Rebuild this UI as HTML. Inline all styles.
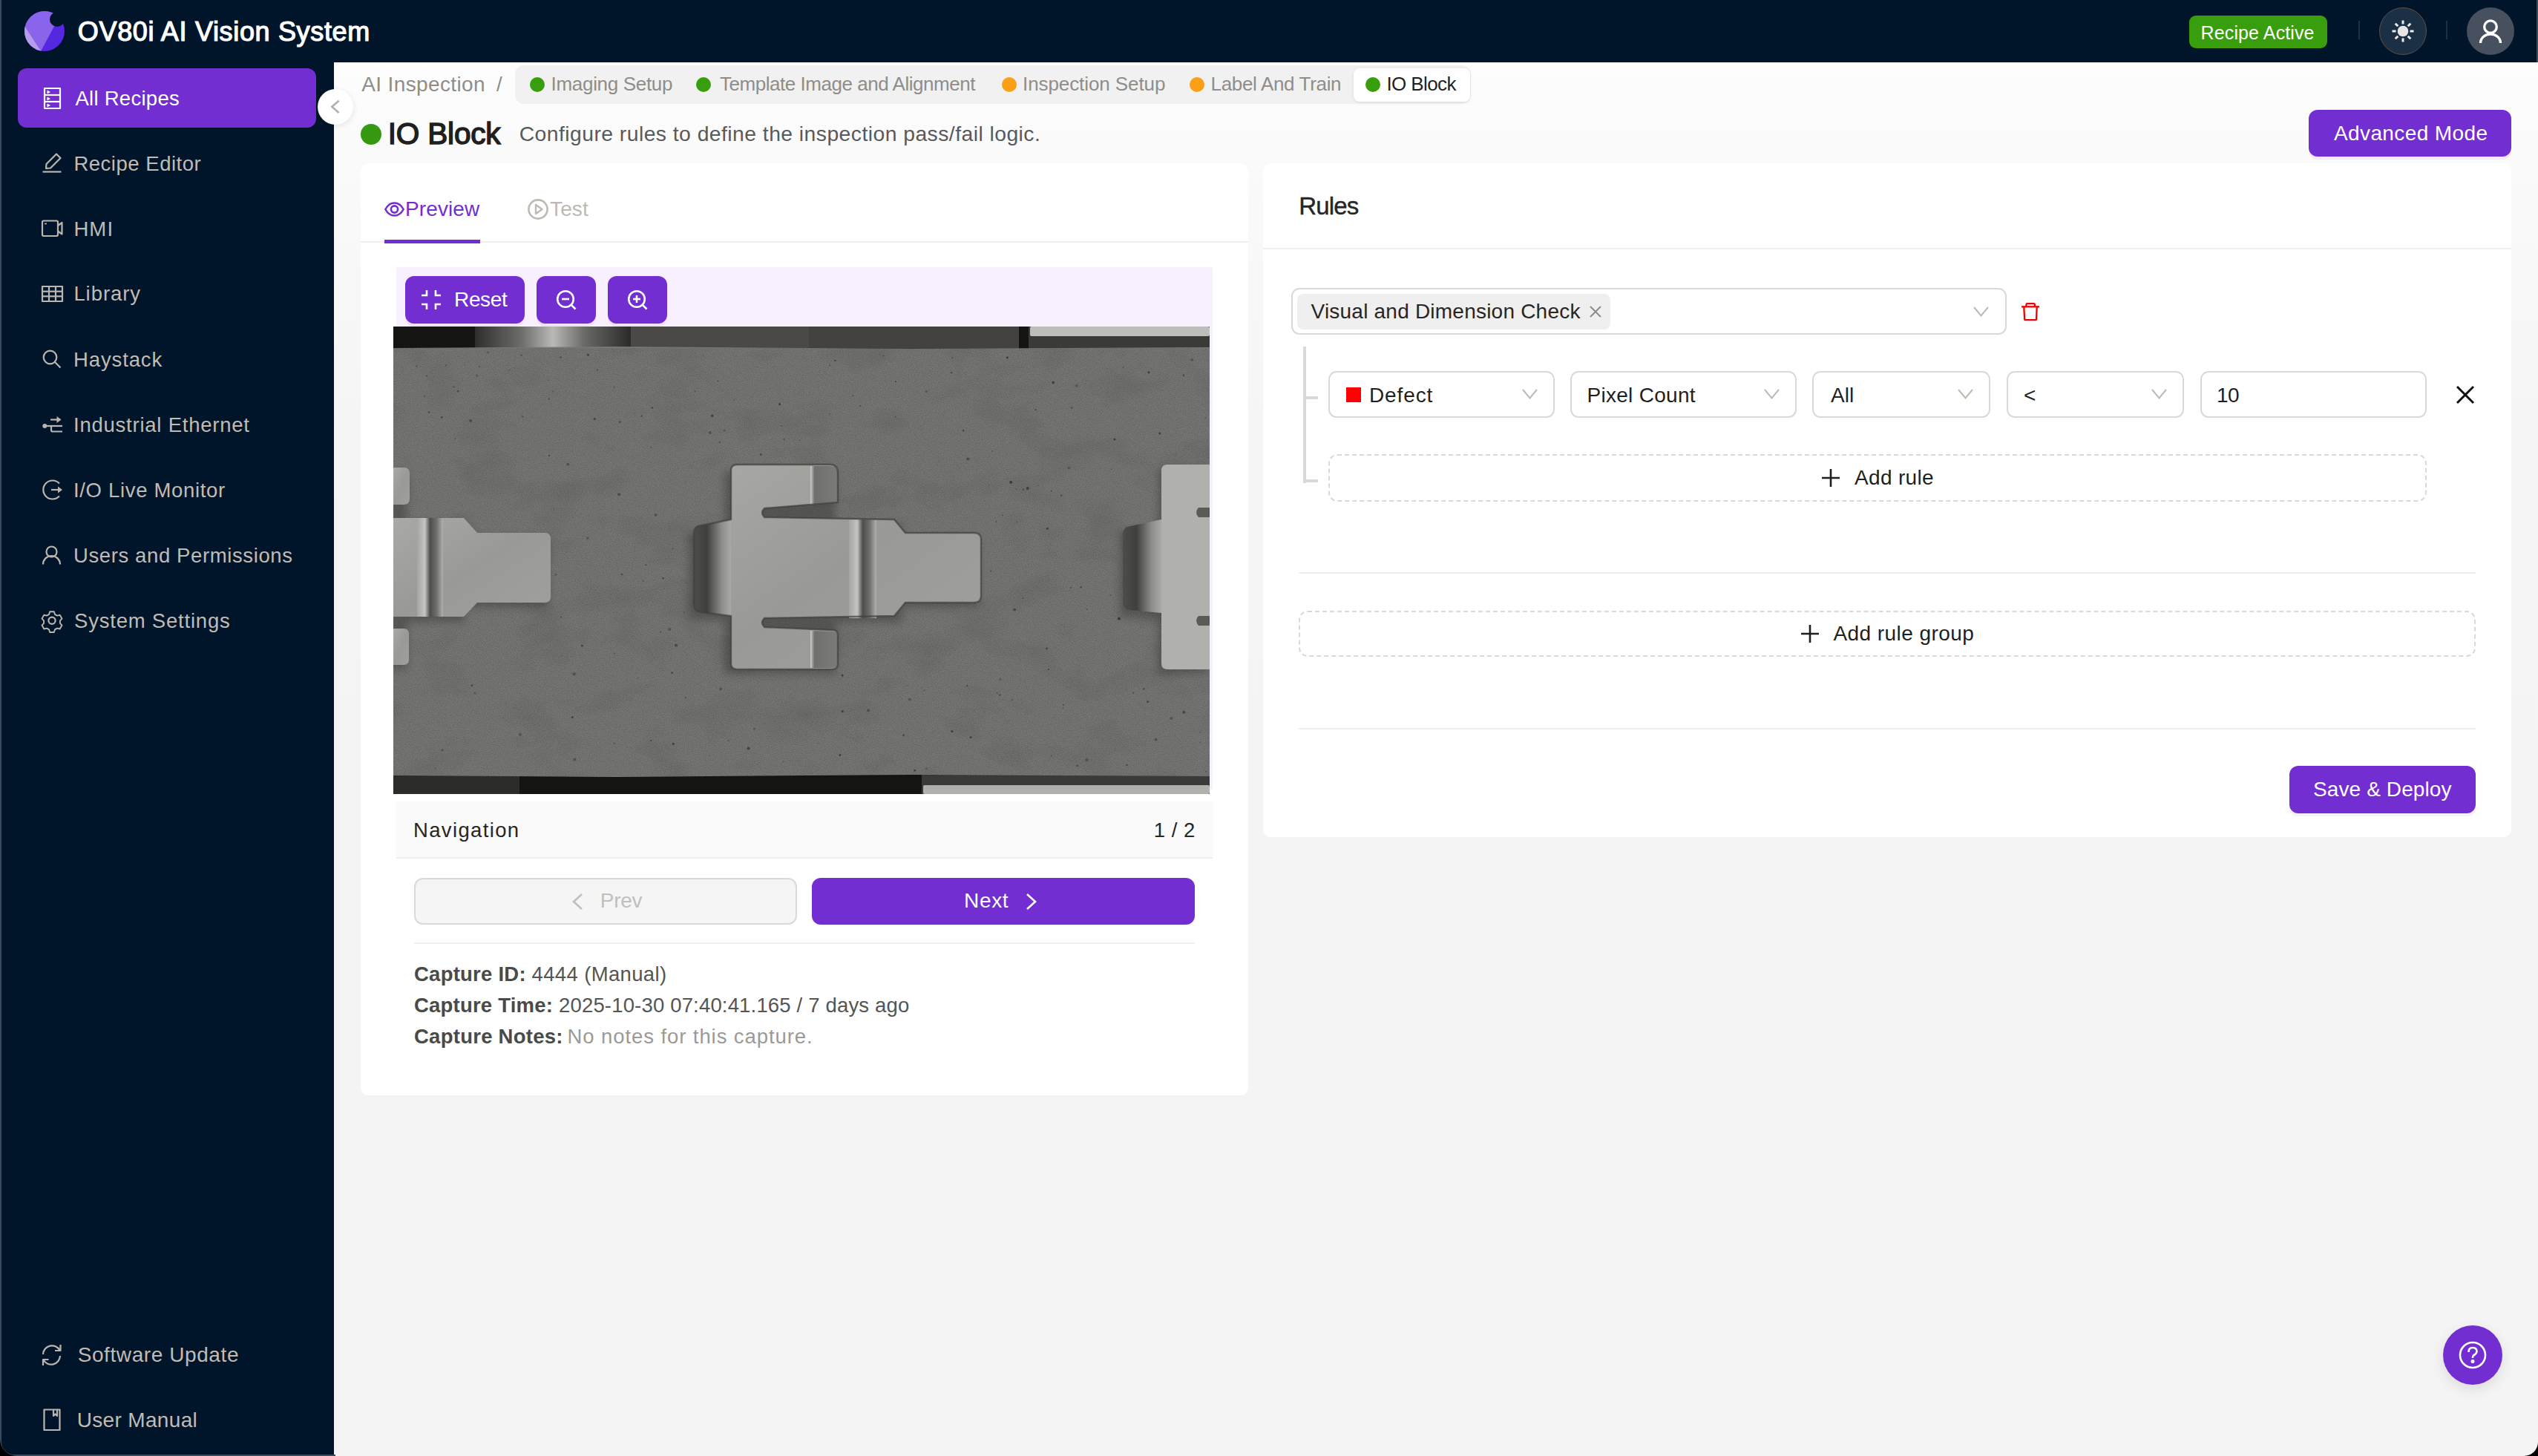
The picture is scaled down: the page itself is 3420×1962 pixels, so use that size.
<!DOCTYPE html>
<html><head><meta charset="utf-8">
<style>
*{box-sizing:border-box;margin:0;padding:0}
html,body{width:3420px;height:1962px;overflow:hidden;background:#000}
body{font-family:"Liberation Sans",sans-serif;position:relative}
.abs{position:absolute}
#win{position:absolute;left:0;top:0;width:3420px;height:1962px;background:#001529;border-radius:0 0 19px 23px;overflow:hidden}
#lb{position:absolute;left:0;top:0;width:452px;height:1962px;border-left:2px solid #3b4a5b;border-bottom:2px solid #3b4a5b;border-bottom-left-radius:19px;z-index:5;pointer-events:none}
#rb{position:absolute;right:0;top:0;width:2px;height:84px;background:#3d4a5a;z-index:5}
#main{position:absolute;left:450px;top:84px;width:2970px;height:1878px;background:linear-gradient(#fdfdfd 0px,#f9f9f9 200px,#f5f5f5 500px,#f4f4f4 1000px,#f4f4f4)}
.menu{position:absolute;left:24px;width:402px;height:80px;border-radius:12px;color:#c6c1ba;font-size:27px}
.menu .t{position:absolute;left:77px;top:0;line-height:80px;white-space:nowrap}
.menu.act{background:#722ed1;color:#fff}
.card{position:absolute;background:#fff;border-radius:11px}
.btnp{position:absolute;background:#722ed1;border-radius:12px;box-shadow:0 4px 0 rgba(114,46,209,.07)}
.sel{position:absolute;border:2px solid #d9d9d9;border-radius:11px;background:#fff}
.txt{position:absolute;white-space:nowrap}
.dot{width:20px;height:20px;border-radius:50%}
.chev{width:24px;height:20px}
.chev path{fill:none;stroke:#bdbab4;stroke-width:2}
.dash{border:2px dashed #d9d9d9;border-radius:12px}
#m1{left:101.40px!important;top:111.67px!important;font-size:27.50px!important;line-height:41px!important;letter-spacing:0.280px!important}
#m2{left:99.40px!important;top:199.97px!important;font-size:27.50px!important;line-height:41px!important;letter-spacing:0.523px!important}
#m3{left:99.40px!important;top:287.97px!important;font-size:27.50px!important;line-height:41px!important;letter-spacing:1.116px!important}
#m4{left:99.40px!important;top:375.37px!important;font-size:27.50px!important;line-height:41px!important;letter-spacing:0.932px!important}
#m5{left:99.00px!important;top:463.67px!important;font-size:27.50px!important;line-height:41px!important;letter-spacing:0.880px!important}
#m6{left:99.00px!important;top:551.67px!important;font-size:27.50px!important;line-height:41px!important;letter-spacing:0.764px!important}
#m7{left:99.00px!important;top:639.67px!important;font-size:27.50px!important;line-height:41px!important;letter-spacing:0.671px!important}
#m8{left:99.00px!important;top:727.67px!important;font-size:27.50px!important;line-height:41px!important;letter-spacing:0.611px!important}
#m9{left:100.00px!important;top:815.67px!important;font-size:27.50px!important;line-height:41px!important;letter-spacing:0.790px!important}
#m10{left:104.70px!important;top:1805.20px!important;font-size:28.00px!important;line-height:42px!important;letter-spacing:0.586px!important}
#m11{left:103.70px!important;top:1893.40px!important;font-size:28.00px!important;line-height:42px!important;letter-spacing:0.339px!important}
#h_title{left:104.80px!important;top:15.53px!important;font-size:36.00px!important;line-height:54px!important;letter-spacing:0.666px!important}
#h_badge{left:2965.60px!important;top:24.64px!important;font-size:25.00px!important;line-height:38px!important;letter-spacing:0.122px!important}
#t_ai{left:487.20px!important;top:92.90px!important;font-size:28.00px!important;line-height:42px!important;letter-spacing:0.375px!important}
#t_s1{left:742.60px!important;top:94.49px!important;font-size:26.00px!important;line-height:39px!important;letter-spacing:-0.317px!important}
#t_s2{left:970.00px!important;top:94.49px!important;font-size:26.00px!important;line-height:39px!important;letter-spacing:-0.463px!important}
#t_s3{left:1378.00px!important;top:94.49px!important;font-size:26.00px!important;line-height:39px!important;letter-spacing:-0.082px!important}
#t_s4{left:1631.50px!important;top:94.49px!important;font-size:26.00px!important;line-height:39px!important;letter-spacing:-0.331px!important}
#t_s5{left:1868.50px!important;top:94.49px!important;font-size:26.00px!important;line-height:39px!important;letter-spacing:-0.607px!important}
#t_iob{left:522.80px!important;top:150.27px!important;font-size:40.50px!important;line-height:61px!important;letter-spacing:-0.185px!important}
#t_desc{left:699.70px!important;top:159.39px!important;font-size:28.30px!important;line-height:42px!important;letter-spacing:0.460px!important}
#t_adv{left:3145.00px!important;top:158.80px!important;font-size:28.00px!important;line-height:42px!important;letter-spacing:0.385px!important}
#t_prev{left:546.00px!important;top:261.30px!important;font-size:28.00px!important;line-height:42px!important;letter-spacing:0.106px!important}
#t_test{left:741.00px!important;top:261.30px!important;font-size:28.00px!important;line-height:42px!important;letter-spacing:0.143px!important}
#t_reset{left:612.00px!important;top:383.30px!important;font-size:28.00px!important;line-height:42px!important;letter-spacing:-0.341px!important}
#t_nav{left:557.00px!important;top:1098.07px!important;font-size:27.50px!important;line-height:41px!important;letter-spacing:1.350px!important}
#t_page{left:1554.80px!important;top:1098.07px!important;font-size:27.50px!important;line-height:41px!important;letter-spacing:0.496px!important}
#t_prevb{left:808.70px!important;top:1193.10px!important;font-size:28.00px!important;line-height:42px!important;letter-spacing:-0.224px!important}
#t_next{left:1299.00px!important;top:1193.10px!important;font-size:28.00px!important;line-height:42px!important;letter-spacing:0.669px!important}
#c1l{left:558.00px!important;top:1291.67px!important;font-size:27.50px!important;line-height:41px!important;letter-spacing:0.236px!important}
#c1v{left:716.60px!important;top:1291.67px!important;font-size:27.50px!important;line-height:41px!important;letter-spacing:0.344px!important}
#c2l{left:558.00px!important;top:1333.57px!important;font-size:27.50px!important;line-height:41px!important;letter-spacing:0.206px!important}
#c2v{left:753.00px!important;top:1333.57px!important;font-size:27.50px!important;line-height:41px!important;letter-spacing:0.170px!important}
#c3l{left:558.00px!important;top:1376.27px!important;font-size:27.50px!important;line-height:41px!important;letter-spacing:0.258px!important}
#c3v{left:764.50px!important;top:1376.27px!important;font-size:27.50px!important;line-height:41px!important;letter-spacing:0.916px!important}
#t_rules{left:1750.30px!important;top:252.57px!important;font-size:33.00px!important;line-height:50px!important;letter-spacing:-0.842px!important}
#t_vdc{left:1766.50px!important;top:399.30px!important;font-size:28.00px!important;line-height:42px!important;letter-spacing:0.218px!important}
#t_def{left:1845.00px!important;top:511.70px!important;font-size:28.00px!important;line-height:42px!important;letter-spacing:0.871px!important}
#t_pc{left:2138.50px!important;top:511.70px!important;font-size:28.00px!important;line-height:42px!important;letter-spacing:0.289px!important}
#t_all{left:2467.00px!important;top:511.70px!important;font-size:28.00px!important;line-height:42px!important;letter-spacing:0.002px!important}
#t_lt{left:2727.00px!important;top:511.70px!important;font-size:28.00px!important;line-height:42px!important;letter-spacing:0.000px!important}
#t_10{left:2987.00px!important;top:511.70px!important;font-size:28.00px!important;line-height:42px!important;letter-spacing:-0.572px!important}
#t_addr{left:2499.00px!important;top:623.30px!important;font-size:28.00px!important;line-height:42px!important;letter-spacing:0.326px!important}
#t_addg{left:2470.50px!important;top:832.80px!important;font-size:28.00px!important;line-height:42px!important;letter-spacing:0.438px!important}
#t_save{left:3117.00px!important;top:1042.80px!important;font-size:28.00px!important;line-height:42px!important;letter-spacing:0.107px!important}

</style></head><body>
<div id="win">
  <div id="lb"></div><div id="rb"></div>
  <!-- header -->
  <svg class="abs" style="left:33px;top:15px" width="56" height="56" viewBox="0 0 56 56">
    <defs><clipPath id="lc"><circle cx="27" cy="27" r="27"/></clipPath></defs>
    <g clip-path="url(#lc)">
      <rect x="0" y="0" width="56" height="56" fill="#5328e0"/>
      <polygon points="0,0 51,0 21,56 0,56" fill="#8a64ea"/>
      <polygon points="0,20 23.4,56 0,56" fill="#b59ced"/>
    </g>
    <circle cx="44" cy="11" r="10" fill="#001529"/>
  </svg>
  <div class="txt" id="h_title" style="color:#fff;-webkit-text-stroke:1.2px #fff">OV80i AI Vision System</div>
  <div class="abs" style="left:2950px;top:21px;width:186px;height:44px;background:#389e0d;border-radius:9px"></div>
  <div class="txt" id="h_badge" style="color:#fff">Recipe Active</div>
  <div class="abs" style="left:3178px;top:28px;width:2px;height:25px;background:#1e3048"></div>
  <div class="abs" style="left:3296px;top:28px;width:2px;height:25px;background:#1e3048"></div>
  <div class="abs" style="left:3206px;top:10px;width:64px;height:64px;border-radius:50%;background:#1b2f45;border:1.5px solid #5e5140"></div>
  <svg class="abs" style="left:3218px;top:22px" width="40" height="40" viewBox="-20 -20 40 40">
    <circle r="7.3" fill="#e6e6e6"/>
    <g stroke="#ececec" stroke-width="3">
      <line x1="0" y1="-9.5" x2="0" y2="-14.5"/><line x1="0" y1="9.5" x2="0" y2="14.5"/>
      <line x1="-9.5" y1="0" x2="-14.5" y2="0"/><line x1="9.5" y1="0" x2="14.5" y2="0"/>
      <line x1="6.7" y1="-6.7" x2="10.3" y2="-10.3"/><line x1="-6.7" y1="-6.7" x2="-10.3" y2="-10.3"/>
      <line x1="6.7" y1="6.7" x2="10.3" y2="10.3"/><line x1="-6.7" y1="6.7" x2="-10.3" y2="10.3"/>
    </g>
  </svg>
  <div class="abs" style="left:3324px;top:10px;width:64px;height:64px;border-radius:50%;background:#46505e"></div>
  <svg class="abs" style="left:3324px;top:10px" width="64" height="64" viewBox="0 0 64 64">
    <circle cx="32" cy="26.2" r="8.3" fill="none" stroke="#fff" stroke-width="3.4"/>
    <path d="M18.5 48 A13.5 12 0 0 1 45.5 48" fill="none" stroke="#fff" stroke-width="3.4"/>
  </svg>
  <!-- sidebar -->
  <div class="menu act" style="top:92px"></div>
  <div class="menu" style="top:180px"></div>
  <div class="menu" style="top:268px"></div>
  <div class="menu" style="top:356px"></div>
  <div class="menu" style="top:444px"></div>
  <div class="menu" style="top:532px"></div>
  <div class="menu" style="top:620px"></div>
  <div class="menu" style="top:708px"></div>
  <div class="menu" style="top:796px"></div>
  <div class="menu" style="top:1786px"></div>
  <div class="menu" style="top:1873px"></div>
  <div class="txt" id="m1" style="color:#fff">All Recipes</div>
  <div class="txt" id="m2" style="color:#c0bbb4">Recipe Editor</div>
  <div class="txt" id="m3" style="color:#c0bbb4">HMI</div>
  <div class="txt" id="m4" style="color:#c0bbb4">Library</div>
  <div class="txt" id="m5" style="color:#c0bbb4">Haystack</div>
  <div class="txt" id="m6" style="color:#c0bbb4">Industrial Ethernet</div>
  <div class="txt" id="m7" style="color:#c0bbb4">I/O Live Monitor</div>
  <div class="txt" id="m8" style="color:#c0bbb4">Users and Permissions</div>
  <div class="txt" id="m9" style="color:#c0bbb4">System Settings</div>
  <div class="txt" id="m10" style="color:#c0bbb4">Software Update</div>
  <div class="txt" id="m11" style="color:#c0bbb4">User Manual</div>
  <svg class="abs" style="left:0;top:0" width="450" height="1962" viewBox="0 0 450 1962" fill="none" stroke="#bab6af" stroke-width="2.2" stroke-linejoin="round">
    <!-- all recipes -->
    <g stroke="#fff">
      <rect x="60" y="119" width="21" height="27"/>
      <line x1="60" y1="128" x2="81" y2="128"/><line x1="60" y1="137" x2="81" y2="137"/>
      <path d="M64 122.5 l3 1.5 l-3 1.5z M64 131.5 l3 1.5 l-3 1.5z M64 140.5 l3 1.5 l-3 1.5z" fill="#fff" stroke-width="1.2"/>
    </g>
    <!-- editor -->
    <path d="M62 227 L62.5 221 L76 207.5 L81.5 213 L68 226.5 Z"/>
    <line x1="57.5" y1="231.5" x2="82.5" y2="231.5"/>
    <!-- hmi -->
    <rect x="57" y="297.5" width="21" height="20.5" rx="2"/>
    <path d="M78 304 L83.5 300 L83.5 315.5 L78 311.5"/>
    <line x1="60" y1="301.5" x2="63" y2="301.5" stroke-width="1.6"/>
    <!-- library -->
    <rect x="57" y="386" width="27" height="20"/>
    <line x1="66" y1="386" x2="66" y2="406"/><line x1="75" y1="386" x2="75" y2="406"/>
    <line x1="57" y1="392.7" x2="84" y2="392.7"/><line x1="57" y1="399.3" x2="84" y2="399.3"/>
    <!-- haystack -->
    <circle cx="67.5" cy="481.5" r="8.8"/>
    <line x1="73.8" y1="487.8" x2="81.5" y2="495.5"/>
    <!-- industrial ethernet -->
    <line x1="68" y1="565.5" x2="80" y2="565.5"/>
    <path d="M76.5 561 L82.5 565.5 L76.5 570 Z" fill="#bab6af" stroke="none"/>
    <circle cx="60.3" cy="574" r="3" fill="#bab6af" stroke="none"/>
    <line x1="60" y1="574" x2="84" y2="574"/>
    <path d="M69 574 V579.5 Q69 581.5 71 581.5 H84"/>
    <!-- io live monitor -->
    <path d="M80 651.5 A12.5 12.5 0 1 0 80 668.5"/>
    <line x1="69" y1="660" x2="80" y2="660"/>
    <path d="M78 655.5 L84 660 L78 664.5 Z" fill="#bab6af" stroke="none"/>
    <!-- users -->
    <circle cx="69.5" cy="743.5" r="7"/>
    <path d="M58 760.5 A11.5 11.5 0 0 1 81 760.5"/>
    <!-- settings -->
    <path d="M66.2 822.5 h6.6 l1.3 4.2 l3.5 2 l4.3 -1 l3.3 5.7 l-3 3.2 v4 l3 3.2 l-3.3 5.7 l-4.3 -1 l-3.5 2 l-1.3 4.2 h-6.6 l-1.3 -4.2 l-3.5 -2 l-4.3 1 l-3.3 -5.7 l3 -3.2 v-4 l-3 -3.2 l3.3 -5.7 l4.3 1 l3.5 -2 z" transform="translate(70 836.3) scale(.86) translate(-69.5 -836.5)"/>
    <circle cx="70" cy="836.3" r="4.6"/>
    <!-- software update -->
    <path d="M81 820 A0 0 0 0 0 81 820" />
    <path d="M80.5 1819.5 A12 12 0 0 0 58 1825"/>
    <path d="M58.5 1832.5 A12 12 0 0 0 81 1827"/>
    <path d="M81.5 1812 V1820 H74" />
    <path d="M58 1840 V1832 H65.5" />
    <!-- user manual -->
    <rect x="59.5" y="1899.5" width="21" height="27.5"/>
    <path d="M72 1899.5 V1908 L74.5 1905.5 L77 1908 V1899.5"/>
  </svg>
  <!-- main -->
  <div id="main"></div>
  <div class="abs" style="left:428px;top:120px;width:48px;height:48px;border-radius:50%;background:#fff;box-shadow:0 2px 8px rgba(0,0,0,.10)"></div>
  <svg class="abs" style="left:440px;top:132px" width="24" height="24" viewBox="0 0 24 24"><path d="M16.6 3.7 L7.3 11.8 L16.6 19.9" fill="none" stroke="#b3b0aa" stroke-width="2.6"/></svg>

  <div class="txt" id="t_ai" style="left:487px;top:94px;font-size:27.5px;color:#8f8d89;line-height:40px">AI Inspection</div>
  <div class="txt" style="left:669px;top:94px;font-size:27.5px;color:#8f8d89;line-height:40px">/</div>
  <div class="abs" style="left:694px;top:88px;width:1288px;height:52px;background:#f1f1f1;border-radius:12px"></div>
  <div class="abs" style="left:1824px;top:92px;width:157px;height:45px;background:#fff;border-radius:8px;box-shadow:0 1px 4px rgba(0,0,0,.10)"></div>
  <div class="abs dot" style="left:714px;top:104px;background:#389e0d"></div>
  <div class="txt" id="t_s1" style="left:744px;top:96px;font-size:25px;color:#8f8d89;line-height:36px">Imaging Setup</div>
  <div class="abs dot" style="left:938px;top:104px;background:#389e0d"></div>
  <div class="txt" id="t_s2" style="left:970px;top:96px;font-size:25px;color:#8f8d89;line-height:36px">Template Image and Alignment</div>
  <div class="abs dot" style="left:1350px;top:104px;background:#fa9f16"></div>
  <div class="txt" id="t_s3" style="left:1380px;top:96px;font-size:25px;color:#8f8d89;line-height:36px">Inspection Setup</div>
  <div class="abs dot" style="left:1603px;top:104px;background:#fa9f16"></div>
  <div class="txt" id="t_s4" style="left:1633px;top:96px;font-size:25px;color:#8f8d89;line-height:36px">Label And Train</div>
  <div class="abs dot" style="left:1840px;top:104px;background:#389e0d"></div>
  <div class="txt" id="t_s5" style="left:1870px;top:96px;font-size:25px;color:#1f1f1f;line-height:36px">IO Block</div>

  <div class="abs" style="left:486px;top:167px;width:28px;height:28px;border-radius:50%;background:#359a12"></div>
  <div class="txt" id="t_iob" style="color:#1f1f1f;-webkit-text-stroke:1.5px #1f1f1f">IO Block</div>
  <div class="txt" id="t_desc" style="left:699px;top:160px;font-size:28px;color:#595959;line-height:40px">Configure rules to define the inspection pass/fail logic.</div>
  <div class="btnp" style="left:3111px;top:148px;width:273px;height:63px"></div>
  <div class="txt" id="t_adv" style="left:3145px;top:159px;font-size:27.5px;color:#fff;line-height:40px">Advanced Mode</div>
  <!-- preview card -->
  <div class="card" style="left:486px;top:220px;width:1196px;height:1256px"></div>
  <div class="abs" style="left:486px;top:325px;width:1196px;height:2px;background:#efefef"></div>
  <div class="abs" style="left:518px;top:323px;width:129px;height:5px;background:#722ed1"></div>
  <svg class="abs" style="left:516px;top:268px" width="32" height="28" viewBox="0 0 32 28">
    <path d="M3.3 14 C7 7, 11.5 5.4, 15.5 5.4 C19.5 5.4, 24 7, 27.7 14 C24 21, 19.5 22.6, 15.5 22.6 C11.5 22.6, 7 21, 3.3 14 Z" fill="none" stroke="#722ed1" stroke-width="2.5"/>
    <circle cx="15.5" cy="14" r="4.6" fill="none" stroke="#722ed1" stroke-width="2.6"/>
  </svg>
  <div class="txt" id="t_prev" style="left:548px;top:262px;font-size:27.5px;color:#722ed1;line-height:40px">Preview</div>
  <svg class="abs" style="left:708px;top:265px" width="34" height="34" viewBox="0 0 34 34">
    <circle cx="17" cy="17" r="12.6" fill="none" stroke="#bdbab4" stroke-width="2.6"/>
    <path d="M14 11 L22.5 17 L14 23 Z" fill="none" stroke="#bdbab4" stroke-width="2.4" stroke-linejoin="round"/>
  </svg>
  <div class="txt" id="t_test" style="left:741px;top:262px;font-size:27.5px;color:#bdbab4;line-height:40px">Test</div>

  <div class="abs" style="left:534px;top:360px;width:1100px;height:704px;background:#f9f0ff"></div>
  <div class="btnp" style="left:546px;top:372px;width:161px;height:64px"></div>
  <svg class="abs" style="left:566px;top:389px" width="30" height="30" viewBox="0 0 30 30" fill="none" stroke="#fff" stroke-width="2.6">
    <path d="M9 2 V9 H2"/><path d="M21 2 V9 H28"/><path d="M9 28 V21 H2"/><path d="M21 28 V21 H28"/>
  </svg>
  <div class="txt" id="t_reset" style="left:614px;top:384px;font-size:27px;color:#fff;line-height:40px">Reset</div>
  <div class="btnp" style="left:723px;top:372px;width:80px;height:64px"></div>
  <svg class="abs" style="left:747px;top:388px" width="32" height="32" viewBox="0 0 32 32" fill="none" stroke="#fff" stroke-width="2.6">
    <circle cx="15" cy="15" r="10.8"/><line x1="10" y1="15" x2="20" y2="15"/><line x1="22.8" y1="22.8" x2="28.5" y2="28.5"/>
  </svg>
  <div class="btnp" style="left:819px;top:372px;width:80px;height:64px"></div>
  <svg class="abs" style="left:843px;top:388px" width="32" height="32" viewBox="0 0 32 32" fill="none" stroke="#fff" stroke-width="2.6">
    <circle cx="15" cy="15" r="10.8"/><line x1="10" y1="15" x2="20" y2="15"/><line x1="15" y1="10" x2="15" y2="20"/><line x1="22.8" y1="22.8" x2="28.5" y2="28.5"/>
  </svg>

    <svg class="abs" style="left:530px;top:440px" width="1100" height="630" viewBox="0 0 1100 630">
    <defs>
      <linearGradient id="cyl" x1="0" x2="1" y1="0" y2="0">
        <stop offset="0" stop-color="#2e2e2c"/><stop offset=".3" stop-color="#6d6d6a"/><stop offset=".5" stop-color="#b9b9b5"/><stop offset=".7" stop-color="#6a6a67"/><stop offset="1" stop-color="#2a2a28"/>
      </linearGradient>
      <linearGradient id="fold" x1="0" x2="1" y1="0" y2="0">
        <stop offset="0" stop-color="#4d4d4a"/><stop offset=".35" stop-color="#3f3f3c"/><stop offset=".75" stop-color="#8d8d89"/><stop offset="1" stop-color="#a9a9a5"/>
      </linearGradient>
      <linearGradient id="groove" x1="0" x2="1" y1="0" y2="0">
        <stop offset="0" stop-color="#a5a5a1"/><stop offset=".3" stop-color="#c4c4c0"/><stop offset=".5" stop-color="#4e4e4b"/><stop offset=".75" stop-color="#6e6e6a"/><stop offset="1" stop-color="#b0b0ac"/>
      </linearGradient>
      <linearGradient id="tip" x1="0" x2="1" y1="0" y2="0">
        <stop offset="0" stop-color="#d0d0cc"/><stop offset=".15" stop-color="#6f6f6b"/><stop offset="1" stop-color="#7b7b77"/>
      </linearGradient>
      <linearGradient id="metal" x1="0" x2="1" y1="0" y2="1">
        <stop offset="0" stop-color="#a9a9a5"/><stop offset=".5" stop-color="#999995"/><stop offset="1" stop-color="#a0a09c"/>
      </linearGradient>
      <filter id="nz" x="0" y="0" width="100%" height="100%">
        <feTurbulence type="fractalNoise" baseFrequency=".9" numOctaves="2" seed="3"/>
        <feColorMatrix values="0 0 0 0 0  0 0 0 0 0  0 0 0 0 0  0 0 0 -1.6 1.05"/>
      </filter>
      <filter id="nz2" x="0" y="0" width="100%" height="100%">
        <feTurbulence type="fractalNoise" baseFrequency=".012 .02" numOctaves="3" seed="7"/>
        <feColorMatrix values="0 0 0 0 0  0 0 0 0 0  0 0 0 0 0  0 0 0 -2.2 1.1"/>
      </filter>
      <filter id="blur6"><feGaussianBlur stdDeviation="6"/></filter>
    </defs>
    <rect width="1100" height="630" fill="#141412"/>
    <!-- top strip -->
    <rect x="110" y="0" width="210" height="30" fill="url(#cyl)"/>
    <rect x="320" y="0" width="523" height="30" fill="#4a4946"/>
    <rect x="560" y="0" width="283" height="30" fill="#43423f"/>
    <rect x="856" y="0" width="244" height="30" fill="#3a3a37"/>
    <rect x="858" y="0" width="242" height="13" rx="2" fill="#bdbdb9"/>
    <!-- bottom strip -->
    <rect x="0" y="600" width="170" height="30" fill="#2c2c2a"/>
    <rect x="712" y="600" width="388" height="30" fill="#3a3a37"/>
    <rect x="714" y="618" width="386" height="12" rx="2" fill="#b0b0ad"/>
    <!-- belt -->
    <path d="M0 29 L300 27 L700 30 L1100 28 L1100 606 L700 604 L300 607 L0 605 Z" fill="#777775"/>
    <rect x="0" y="29" width="1100" height="577" fill="#000" opacity=".22" filter="url(#nz)"/>
    <rect x="0" y="29" width="1100" height="577" fill="#000" opacity=".08" filter="url(#nz2)"/>
    <g fill="#2e2e2c"><circle cx="692.4" cy="484.0" r="0.8" opacity="0.55"/><circle cx="977.9" cy="393.6" r="2.0" opacity="0.79"/><circle cx="676.7" cy="121.8" r="0.8" opacity="0.72"/><circle cx="71.2" cy="52.3" r="1.0" opacity="0.62"/><circle cx="854.8" cy="218.0" r="2.0" opacity="0.73"/><circle cx="1095.4" cy="599.5" r="0.8" opacity="0.67"/><circle cx="347.5" cy="162.9" r="1.2" opacity="0.36"/><circle cx="619.2" cy="93.5" r="0.8" opacity="0.73"/><circle cx="425.6" cy="578.1" r="0.8" opacity="0.45"/><circle cx="1018.0" cy="61.8" r="1.5" opacity="0.79"/><circle cx="437.6" cy="73.6" r="1.0" opacity="0.70"/><circle cx="297.7" cy="81.7" r="1.2" opacity="0.36"/><circle cx="451.4" cy="558.0" r="1.0" opacity="0.46"/><circle cx="112.7" cy="66.1" r="1.5" opacity="0.43"/><circle cx="235.3" cy="185.8" r="2.0" opacity="0.49"/><circle cx="971.8" cy="152.1" r="1.5" opacity="0.80"/><circle cx="48.2" cy="115.4" r="1.5" opacity="0.47"/><circle cx="848.9" cy="219.5" r="1.2" opacity="0.52"/><circle cx="83.4" cy="151.0" r="1.0" opacity="0.36"/><circle cx="914.3" cy="109.4" r="1.5" opacity="0.43"/><circle cx="170.9" cy="549.8" r="2.0" opacity="0.46"/><circle cx="1032.7" cy="144.1" r="1.5" opacity="0.75"/><circle cx="115.8" cy="54.1" r="1.2" opacity="0.46"/><circle cx="774.2" cy="178.5" r="2.0" opacity="0.57"/><circle cx="572.0" cy="561.7" r="0.8" opacity="0.41"/><circle cx="677.0" cy="74.3" r="1.0" opacity="0.76"/><circle cx="225.6" cy="41.4" r="1.2" opacity="0.54"/><circle cx="275.0" cy="58.6" r="1.2" opacity="0.52"/><circle cx="629.1" cy="107.0" r="1.2" opacity="0.41"/><circle cx="805.3" cy="329.5" r="1.0" opacity="0.62"/><circle cx="393.8" cy="209.7" r="0.8" opacity="0.36"/><circle cx="802.6" cy="213.8" r="0.8" opacity="0.38"/><circle cx="773.2" cy="484.2" r="1.2" opacity="0.51"/><circle cx="752.9" cy="545.5" r="1.5" opacity="0.77"/><circle cx="417.6" cy="39.1" r="0.8" opacity="0.39"/><circle cx="702.8" cy="598.2" r="1.5" opacity="0.68"/><circle cx="920.9" cy="79.8" r="2.0" opacity="0.36"/><circle cx="254.3" cy="430.1" r="1.5" opacity="0.70"/><circle cx="377.4" cy="562.3" r="1.5" opacity="0.75"/><circle cx="360.3" cy="411.6" r="1.0" opacity="0.64"/><circle cx="882.9" cy="462.1" r="1.0" opacity="0.75"/><circle cx="348.9" cy="109.6" r="1.5" opacity="0.51"/><circle cx="983.6" cy="55.1" r="0.8" opacity="0.78"/><circle cx="305.4" cy="128.4" r="1.5" opacity="0.56"/><circle cx="1016.6" cy="505.6" r="1.5" opacity="0.63"/><circle cx="921.7" cy="591.8" r="1.5" opacity="0.49"/><circle cx="910.3" cy="190.5" r="2.0" opacity="0.37"/><circle cx="340.7" cy="483.2" r="0.8" opacity="0.64"/><circle cx="446.1" cy="140.3" r="1.2" opacity="0.46"/><circle cx="156.4" cy="58.8" r="0.8" opacity="0.55"/><circle cx="886.9" cy="578.3" r="1.0" opacity="0.44"/><circle cx="522.8" cy="133.9" r="0.8" opacity="0.69"/><circle cx="588.2" cy="52.6" r="1.0" opacity="0.47"/><circle cx="380.9" cy="429.5" r="2.0" opacity="0.58"/><circle cx="1094.5" cy="122.7" r="1.0" opacity="0.39"/><circle cx="687.6" cy="550.7" r="1.5" opacity="0.60"/><circle cx="900.1" cy="227.6" r="1.2" opacity="0.64"/><circle cx="226.6" cy="443.5" r="0.8" opacity="0.45"/><circle cx="988.4" cy="590.9" r="1.2" opacity="0.59"/><circle cx="868.7" cy="214.6" r="0.8" opacity="0.51"/><circle cx="605.1" cy="469.9" r="1.5" opacity="0.76"/><circle cx="241.3" cy="526.5" r="1.5" opacity="0.71"/><circle cx="865.5" cy="112.1" r="1.0" opacity="0.80"/><circle cx="966.4" cy="362.0" r="0.8" opacity="0.69"/><circle cx="913.0" cy="352.1" r="1.0" opacity="0.59"/><circle cx="926.6" cy="351.2" r="1.2" opacity="0.65"/><circle cx="1048.4" cy="527.9" r="2.0" opacity="0.44"/><circle cx="934.4" cy="584.0" r="2.0" opacity="0.47"/><circle cx="127.3" cy="34.8" r="1.5" opacity="0.36"/><circle cx="441.0" cy="488.6" r="2.0" opacity="0.40"/><circle cx="104.2" cy="127.1" r="2.0" opacity="0.56"/><circle cx="1011.2" cy="488.2" r="1.5" opacity="0.47"/><circle cx="520.6" cy="104.4" r="1.5" opacity="0.76"/><circle cx="1027.5" cy="556.4" r="2.0" opacity="0.49"/><circle cx="1016.1" cy="105.8" r="0.8" opacity="0.37"/><circle cx="172.5" cy="38.7" r="1.2" opacity="0.49"/><circle cx="391.5" cy="385.3" r="0.8" opacity="0.57"/><circle cx="640.1" cy="517.6" r="2.0" opacity="0.46"/><circle cx="218.7" cy="334.3" r="1.5" opacity="0.36"/><circle cx="695.8" cy="502.4" r="2.0" opacity="0.42"/><circle cx="225.9" cy="391.8" r="1.0" opacity="0.59"/><circle cx="935.0" cy="380.7" r="1.0" opacity="0.45"/><circle cx="813.9" cy="494.0" r="1.0" opacity="0.49"/><circle cx="347.2" cy="558.0" r="1.0" opacity="0.70"/><circle cx="215.2" cy="87.2" r="1.0" opacity="0.41"/><circle cx="478.5" cy="568.5" r="2.0" opacity="0.71"/><circle cx="753.0" cy="42.1" r="1.0" opacity="0.61"/><circle cx="393.9" cy="500.0" r="1.2" opacity="0.40"/><circle cx="209.2" cy="72.2" r="0.8" opacity="0.36"/><circle cx="837.1" cy="381.6" r="2.0" opacity="0.57"/><circle cx="209.8" cy="97.5" r="1.0" opacity="0.73"/><circle cx="1087.4" cy="560.3" r="0.8" opacity="0.61"/><circle cx="87.1" cy="87.1" r="1.5" opacity="0.56"/><circle cx="660.6" cy="39.6" r="0.8" opacity="0.73"/><circle cx="812.3" cy="263.0" r="1.0" opacity="0.62"/><circle cx="105.9" cy="483.6" r="1.2" opacity="0.75"/><circle cx="880.7" cy="433.7" r="1.5" opacity="0.61"/><circle cx="375.7" cy="466.6" r="1.2" opacity="0.76"/><circle cx="817.9" cy="475.5" r="1.5" opacity="0.41"/><circle cx="363.6" cy="339.2" r="1.2" opacity="0.70"/><circle cx="840.7" cy="263.3" r="1.0" opacity="0.38"/><circle cx="376.5" cy="299.2" r="0.8" opacity="0.75"/><circle cx="1087.7" cy="546.5" r="0.8" opacity="0.45"/><circle cx="372.2" cy="408.1" r="2.0" opacity="0.43"/><circle cx="547.4" cy="153.5" r="0.8" opacity="0.69"/><circle cx="1076.2" cy="45.0" r="2.0" opacity="0.40"/><circle cx="261.8" cy="284.9" r="2.0" opacity="0.37"/><circle cx="216.2" cy="246.1" r="0.8" opacity="0.47"/><circle cx="304.2" cy="226.3" r="2.0" opacity="0.58"/><circle cx="889.2" cy="75.4" r="2.0" opacity="0.65"/><circle cx="1065.2" cy="519.7" r="2.0" opacity="0.63"/><circle cx="66.2" cy="570.8" r="1.5" opacity="0.48"/><circle cx="297.7" cy="561.8" r="1.2" opacity="0.36"/><circle cx="848.6" cy="365.9" r="1.0" opacity="0.53"/><circle cx="752.0" cy="62.1" r="1.2" opacity="0.69"/><circle cx="57.0" cy="595.6" r="1.2" opacity="0.38"/><circle cx="525.5" cy="586.7" r="1.0" opacity="0.37"/><circle cx="109.9" cy="493.8" r="1.5" opacity="0.41"/><circle cx="1054.1" cy="171.8" r="0.8" opacity="0.37"/><circle cx="459.2" cy="99.2" r="0.8" opacity="0.51"/><circle cx="817.3" cy="496.6" r="1.0" opacity="0.78"/><circle cx="806.8" cy="167.9" r="0.8" opacity="0.58"/><circle cx="340.2" cy="321.2" r="1.2" opacity="0.47"/><circle cx="768.1" cy="140.3" r="1.2" opacity="0.69"/><circle cx="210.0" cy="173.9" r="1.0" opacity="0.75"/><circle cx="45.3" cy="66.6" r="1.2" opacity="0.47"/><circle cx="31.5" cy="53.7" r="1.0" opacity="0.59"/><circle cx="81.5" cy="81.3" r="1.0" opacity="0.60"/><circle cx="526.5" cy="152.1" r="1.2" opacity="0.57"/><circle cx="148.2" cy="527.7" r="0.8" opacity="0.55"/><circle cx="903.0" cy="509.7" r="1.0" opacity="0.55"/><circle cx="821.1" cy="254.4" r="1.0" opacity="0.52"/><circle cx="718.4" cy="595.8" r="1.2" opacity="0.48"/><circle cx="833.8" cy="502.9" r="1.0" opacity="0.54"/><circle cx="406.7" cy="87.3" r="1.2" opacity="0.39"/><circle cx="329.6" cy="474.0" r="0.8" opacity="0.49"/><circle cx="839.5" cy="218.9" r="1.0" opacity="0.45"/><circle cx="308.0" cy="334.2" r="1.2" opacity="0.56"/><circle cx="244.4" cy="583.6" r="2.0" opacity="0.46"/><circle cx="426.8" cy="143.1" r="2.0" opacity="0.52"/><circle cx="429.7" cy="120.2" r="2.0" opacity="0.60"/><circle cx="967.5" cy="192.4" r="0.8" opacity="0.45"/><circle cx="65.3" cy="122.4" r="1.2" opacity="0.78"/><circle cx="715.7" cy="490.5" r="0.8" opacity="0.61"/><circle cx="336.8" cy="342.9" r="1.2" opacity="0.39"/><circle cx="809.8" cy="544.5" r="0.8" opacity="0.36"/><circle cx="718.3" cy="87.5" r="1.5" opacity="0.46"/><circle cx="243.6" cy="468.3" r="2.0" opacity="0.50"/><circle cx="886.8" cy="221.8" r="1.0" opacity="0.57"/><circle cx="778.1" cy="553.5" r="1.5" opacity="0.69"/><circle cx="595.3" cy="45.9" r="1.2" opacity="0.67"/><circle cx="881.3" cy="272.3" r="1.5" opacity="0.76"/><circle cx="271.3" cy="124.5" r="1.5" opacity="0.66"/><circle cx="353.7" cy="253.9" r="2.0" opacity="0.48"/><circle cx="1064.9" cy="65.7" r="1.2" opacity="0.68"/><circle cx="334.6" cy="120.6" r="1.0" opacity="0.76"/><circle cx="827.4" cy="41.8" r="1.5" opacity="0.76"/><circle cx="41.9" cy="93.9" r="1.0" opacity="0.51"/><circle cx="486.4" cy="541.9" r="1.5" opacity="0.43"/><circle cx="832.2" cy="209.7" r="2.0" opacity="0.77"/><circle cx="605.2" cy="518.4" r="1.5" opacity="0.75"/><circle cx="601.9" cy="577.5" r="1.5" opacity="0.74"/><circle cx="439.8" cy="155.9" r="1.0" opacity="0.71"/><circle cx="262.4" cy="38.2" r="1.5" opacity="0.76"/><circle cx="495.2" cy="172.5" r="1.5" opacity="0.62"/><circle cx="174.4" cy="121.4" r="1.2" opacity="0.42"/><circle cx="997.3" cy="493.7" r="1.0" opacity="0.64"/><circle cx="587.9" cy="117.9" r="1.0" opacity="0.35"/><circle cx="902.3" cy="514.3" r="1.0" opacity="0.39"/><circle cx="297.8" cy="440.4" r="0.8" opacity="0.75"/></g>
    <!-- shadows -->
    <g filter="url(#blur6)" fill="#000" opacity=".25">
      <path d="M450 190 H600 V260 H690 V280 H792 V372 H690 V392 H600 V462 H450 V390 H402 V272 H450 Z" transform="translate(-4 6)"/>
      <path d="M0 190 H22 V258 H100 V278 H212 V372 H100 V392 H22 V456 H0 Z" transform="translate(-4 6)"/>
      <path d="M1035 186 H1100 V462 H1035 V386 H983 V270 H1035 Z" transform="translate(-4 6)"/>
    </g>
    <!-- center clip -->
    <path d="M463 186 H588 Q599 186 599 197 V237 L500 245 Q494 251 500 257 L675 260 L690 278 H783 Q792 278 792 287 V363 Q792 372 783 372 H690 L675 390 L500 393 Q494 399 500 405 L592 409 Q599 409 599 416 V455 Q599 462 590 462 H463 Q455 462 455 454 V390 L415 385 Q405 384 405 374 V278 Q405 269 415 268 L455 260 V194 Q455 186 463 186 Z" fill="url(#metal)"/>
    <path d="M415 268 L455 260 V390 L415 385 Q405 384 405 374 V278 Q405 269 415 268 Z" fill="url(#fold)"/>
    <rect x="614" y="260" width="37" height="133" fill="url(#groove)"/>
    <path d="M562 188 H588 Q599 188 599 197 V237 L562 240 Z" fill="url(#tip)"/>
    <path d="M562 410 L592 411 Q599 411 599 418 V455 Q599 460 590 460 H562 Z" fill="url(#tip)"/>
    <path d="M463 186 H588 Q599 186 599 197 V237 L500 245 Q494 251 500 257 L675 260 L690 278 H783 Q792 278 792 287 V363 Q792 372 783 372 H690 L675 390 L500 393 Q494 399 500 405 L592 409 Q599 409 599 416 V455 Q599 462 590 462 H463 Q455 462 455 454 V390 L415 385 Q405 384 405 374 V278 Q405 269 415 268 L455 260 V194 Q455 186 463 186 Z" fill="none" stroke="#3e3e3b" stroke-width="2.4" opacity=".7"/>
    <!-- left clip -->
    <path d="M0 190 H15 Q22 190 22 198 V232 Q22 240 14 240 H0 Z" fill="url(#metal)"/>
    <path d="M0 258 H95 L113 278 H204 Q212 278 212 286 V364 Q212 372 204 372 H113 L95 391 H0 Z" fill="url(#metal)"/>
    <rect x="32" y="258" width="35" height="133" fill="url(#groove)"/>
    <path d="M0 407 H14 Q21 407 21 414 V449 Q21 456 14 456 H0 Z" fill="url(#metal)"/>
    <!-- right clip -->
    <path d="M1043 186 H1100 V462 H1043 Q1035 462 1035 454 V194 Q1035 186 1043 186 Z" fill="#b0b0ac"/>
    <path d="M993 269 L1035 260 V386 L993 382 Q983 381 983 371 V280 Q983 270 993 269 Z" fill="url(#fold)"/>
    <path d="M1100 244 H1085 Q1079 250 1085 257 H1100 Z" fill="#5a5a56"/>
    <path d="M1100 390 H1085 Q1079 396 1085 403 H1100 Z" fill="#5a5a56"/>
  </svg>


  <div class="abs" style="left:534px;top:1080px;width:1100px;height:77px;background:#fafafa;border-bottom:2px solid #efefef"></div>
  <div class="txt" id="t_nav" style="left:558px;top:1098px;font-size:28px;color:#262626;line-height:40px">Navigation</div>
  <div class="txt" id="t_page" style="left:1557px;top:1098px;font-size:28px;color:#262626;line-height:40px">1 / 2</div>
  <div class="abs" style="left:558px;top:1183px;width:516px;height:63px;background:#f5f5f5;border:2px solid #d9d9d9;border-radius:12px"></div>
  <svg class="abs" style="left:766px;top:1200px" width="24" height="30" viewBox="0 0 24 30"><path d="M18 5 L7 15 L18 25" fill="none" stroke="#bfbfbf" stroke-width="2.6"/></svg>
  <div class="txt" id="t_prevb" style="left:811px;top:1194px;font-size:28px;color:#bfbfbf;line-height:40px">Prev</div>
  <div class="btnp" style="left:1094px;top:1183px;width:516px;height:63px;box-shadow:0 2px 0 rgba(114,46,209,.06)"></div>
  <div class="txt" id="t_next" style="left:1301px;top:1194px;font-size:28px;color:#fff;line-height:40px">Next</div>
  <svg class="abs" style="left:1378px;top:1200px" width="24" height="30" viewBox="0 0 24 30"><path d="M6 5 L17 15 L6 25" fill="none" stroke="#fff" stroke-width="2.6"/></svg>
  <div class="abs" style="left:558px;top:1270px;width:1052px;height:2px;background:#efefef"></div>

  <div class="txt" id="c1l" style="color:#4a4a48;font-weight:bold">Capture ID:</div>
  <div class="txt" id="c1v" style="color:#555553">4444 (Manual)</div>
  <div class="txt" id="c2l" style="color:#4a4a48;font-weight:bold">Capture Time:</div>
  <div class="txt" id="c2v" style="color:#555553">2025-10-30 07:40:41.165 / 7 days ago</div>
  <div class="txt" id="c3l" style="color:#4a4a48;font-weight:bold">Capture Notes:</div>
  <div class="txt" id="c3v" style="color:#9b9a96">No notes for this capture.</div>
  <!-- rules card -->
  <div class="card" style="left:1702px;top:220px;width:1682px;height:908px"></div>
  <div class="txt" id="t_rules" style="left:1750px;top:256px;font-size:33px;color:#262626;line-height:44px;-webkit-text-stroke:.4px #262626">Rules</div>
  <div class="abs" style="left:1702px;top:334px;width:1682px;height:2px;background:#efefef"></div>

  <div class="sel" style="left:1740px;top:388px;width:964px;height:63px"></div>
  <div class="abs" style="left:1748px;top:396px;width:422px;height:48px;background:#efefef;border-radius:8px"></div>
  <div class="txt" id="t_vdc" style="left:1766px;top:400px;font-size:28px;color:#262626;line-height:40px">Visual and Dimension Check</div>
  <svg class="abs" style="left:2140px;top:410px" width="20" height="20" viewBox="0 0 20 20"><path d="M3 3 L17 17 M17 3 L3 17" stroke="#8c8c8c" stroke-width="2"/></svg>
  <svg class="abs chev" style="left:2658px;top:410px"><path d="M2 4 L11.5 15.5 L21 4" /></svg>
  <svg class="abs" style="left:2720px;top:404px" width="32" height="32" viewBox="0 0 32 32" fill="none" stroke="#f00000" stroke-width="2.3" stroke-linejoin="round">
    <path d="M4.1 9.3 H28"/><path d="M10.4 9.3 V6.5 Q10.4 5.2 11.7 5.2 H20.6 Q21.9 5.2 21.9 6.5 V9.3"/><path d="M7.3 9.3 L8.1 25.6 Q8.2 27.2 9.8 27.2 H22.4 Q24 27.2 24.1 25.6 L24.7 9.3"/>
  </svg>

  <div class="abs" style="left:1756px;top:467px;width:4px;height:184px;background:#d9d9d9"></div>
  <div class="abs" style="left:1760px;top:534px;width:16px;height:4px;background:#d9d9d9"></div>
  <div class="abs" style="left:1760px;top:646px;width:16px;height:4px;background:#d9d9d9"></div>

  <div class="sel" style="left:1790px;top:500px;width:305px;height:63px"></div>
  <div class="abs" style="left:1814px;top:522px;width:20px;height:20px;background:#f00"></div>
  <div class="txt" id="t_def" style="left:1847px;top:512px;font-size:28px;color:#1f1f1f;line-height:40px">Defect</div>
  <svg class="abs chev" style="left:2050px;top:521px"><path d="M2 4 L11.5 15.5 L21 4" /></svg>

  <div class="sel" style="left:2116px;top:500px;width:305px;height:63px"></div>
  <div class="txt" id="t_pc" style="left:2140px;top:512px;font-size:28px;color:#1f1f1f;line-height:40px">Pixel Count</div>
  <svg class="abs chev" style="left:2376px;top:521px"><path d="M2 4 L11.5 15.5 L21 4" /></svg>

  <div class="sel" style="left:2442px;top:500px;width:240px;height:63px"></div>
  <div class="txt" id="t_all" style="left:2467px;top:512px;font-size:28px;color:#1f1f1f;line-height:40px">All</div>
  <svg class="abs chev" style="left:2637px;top:521px"><path d="M2 4 L11.5 15.5 L21 4" /></svg>

  <div class="sel" style="left:2704px;top:500px;width:239px;height:63px"></div>
  <div class="txt" id="t_lt" style="left:2727px;top:512px;font-size:28px;color:#1f1f1f;line-height:40px">&lt;</div>
  <svg class="abs chev" style="left:2898px;top:521px"><path d="M2 4 L11.5 15.5 L21 4" /></svg>

  <div class="sel" style="left:2965px;top:500px;width:305px;height:63px"></div>
  <div class="txt" id="t_10" style="left:2988px;top:512px;font-size:28px;color:#1f1f1f;line-height:40px">10</div>
  <svg class="abs" style="left:3307px;top:517px" width="30" height="30" viewBox="0 0 30 30"><path d="M4 4 L26 26 M26 4 L4 26" stroke="#111" stroke-width="3"/></svg>

  <div class="abs dash" style="left:1790px;top:612px;width:1480px;height:64px"></div>
  <svg class="abs" style="left:2452px;top:629px" width="30" height="30" viewBox="0 0 30 30"><path d="M15 3 V27 M3 15 H27" stroke="#1f1f1f" stroke-width="2.6"/></svg>
  <div class="txt" id="t_addr" style="left:2499px;top:624px;font-size:28px;color:#1f1f1f;line-height:40px">Add rule</div>

  <div class="abs" style="left:1750px;top:771px;width:1586px;height:2px;background:#efefef"></div>
  <div class="abs dash" style="left:1750px;top:823px;width:1586px;height:62px"></div>
  <svg class="abs" style="left:2424px;top:839px" width="30" height="30" viewBox="0 0 30 30"><path d="M15 3 V27 M3 15 H27" stroke="#1f1f1f" stroke-width="2.6"/></svg>
  <div class="txt" id="t_addg" style="left:2470px;top:834px;font-size:28px;color:#1f1f1f;line-height:40px">Add rule group</div>
  <div class="abs" style="left:1750px;top:981px;width:1586px;height:2px;background:#efefef"></div>

  <div class="btnp" style="left:3085px;top:1032px;width:251px;height:64px"></div>
  <div class="txt" id="t_save" style="left:3118px;top:1044px;font-size:28px;color:#fff;line-height:40px">Save &amp; Deploy</div>

  <!-- help -->
  <div class="abs" style="left:3292px;top:1786px;width:80px;height:80px;border-radius:50%;background:#722ed1;box-shadow:0 6px 18px rgba(0,0,0,.10)"></div>
  <svg class="abs" style="left:3312px;top:1806px" width="40" height="40" viewBox="0 0 40 40" fill="none" stroke="#fff" stroke-width="2.6">
    <circle cx="20" cy="20" r="17"/>
    <path d="M14.5 16 Q14.5 10 20 10 Q25.5 10 25.5 15 Q25.5 18 21 20.5 Q20 21.3 20 24"/>
    <circle cx="20" cy="28.5" r="1.2" fill="#fff"/>
  </svg>

</div>
</body></html>
